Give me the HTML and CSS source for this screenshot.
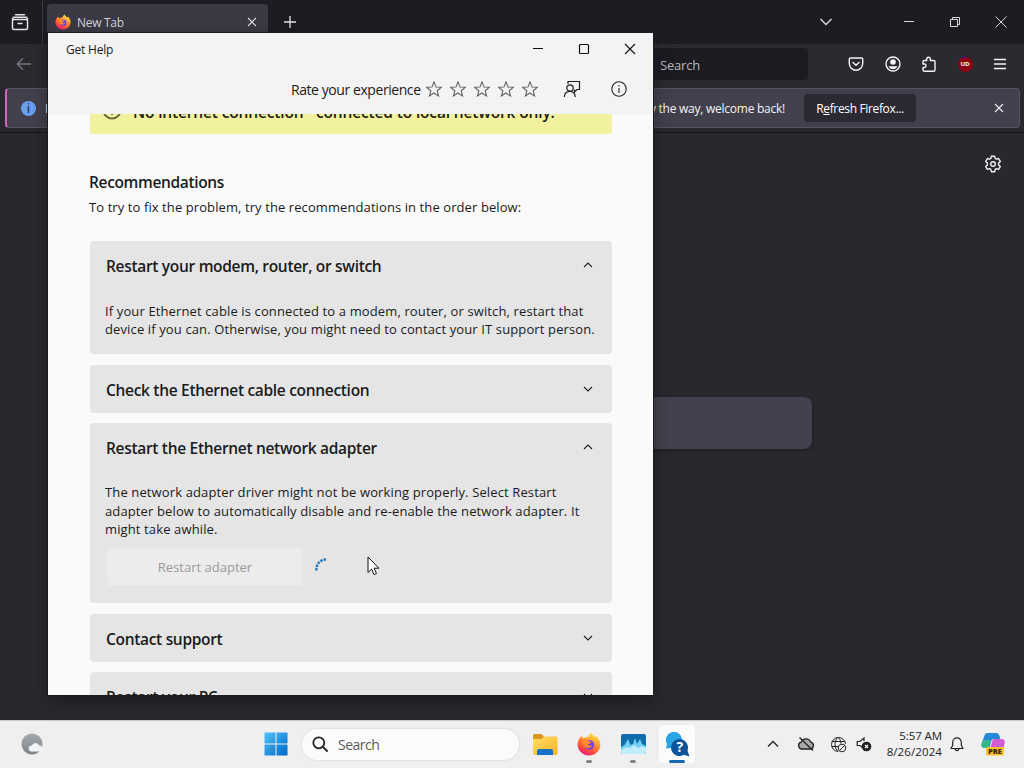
FILE: index.html
```
<!DOCTYPE html>
<html lang="en">
<head>
    <meta charset="UTF-8">
    <meta name="viewport" content="width=device-width, initial-scale=1.0">
    <title>Get Help</title>
    <link rel="stylesheet" href="styles.css">
</head>
<body>
    <!-- Shared logos -->
    <svg class="defs" width="0" height="0">
        <defs>
            <linearGradient id="foxBody" x1="0.8" y1="0" x2="0.3" y2="1">
                <stop offset="0" stop-color="#fff44f"/>
                <stop offset="0.4" stop-color="#ff9a2e"/>
                <stop offset="0.75" stop-color="#ff4b3e"/>
                <stop offset="1" stop-color="#e31587"/>
            </linearGradient>
            <linearGradient id="winBlue" x1="0" y1="0" x2="1" y2="1">
                <stop offset="0" stop-color="#4fc3f7"/>
                <stop offset="1" stop-color="#0067c8"/>
            </linearGradient>
            <linearGradient id="folder" x1="0" y1="0" x2="1" y2="1">
                <stop offset="0" stop-color="#ffdc6b"/>
                <stop offset="1" stop-color="#f9b81f"/>
            </linearGradient>
            <linearGradient id="moon" x1="0" y1="0" x2="0" y2="1">
                <stop offset="0" stop-color="#a3abb0"/>
                <stop offset="1" stop-color="#7d858b"/>
            </linearGradient>
            <symbol id="firefox" viewBox="0 0 24 24">
                <path fill="url(#foxBody)" d="M3 5.5 4.6 4l1.6 2.4C8 5.2 9.8 5 11.2 5.3 11.6 3.4 13 1.5 14.6.6c.2 2 2 3 3.4 4.2l1.5-.6c2.5 2.3 3.9 5.3 3.9 8.3A11.4 11.4 0 0 1 12 23.6 11.4 11.4 0 0 1 .6 12.5C.6 9.7 1.6 7.2 3 5.5z"/>
                <circle cx="12.4" cy="13" r="4.8" fill="#7542e5"/>
                <path fill="#ff8a26" d="M5.5 8.5c2-1 4.5-.5 6 .8 1.2.2 2.3.5 3 1-1 1.2-3 1-3.5 2.5 1 1.3 3 1 4.5.5-1 2.5-4.5 3.5-7.2 2C6 14 5 11 5.5 8.5z"/>
            </symbol>
        </defs>
    </svg>

    <div class="desktop">
        <div class="browser">
            <div class="tabbar">
                <div class="tab-overview">
                    <svg width="18" height="18" viewBox="0 0 18 18" fill="none" stroke="#e4e4e8" stroke-width="1.5" stroke-linecap="round"><path d="M4.5 1.7h9M1.5 6.2v-.7l1.2-1.2h12.6l1.2 1.2v.7"/><rect x="1.5" y="6.5" width="15" height="10" rx="1.5"/><path d="M7 10.5h4"/></svg>
                </div>
                <div class="tab">
                    <svg width="16" height="16"><use href="#firefox"/></svg>
                    <span class="tab-title">New Tab</span>
                    <svg width="10" height="10" viewBox="0 0 10 10" stroke="#d8d8dc" stroke-width="1.2"><path d="M1 1l8 8M9 1l-8 8"/></svg>
                </div>
                <svg class="new-tab" width="12" height="12" viewBox="0 0 12 12" stroke="#e4e4e8" stroke-width="1.3"><path d="M6 0v12M0 6h12"/></svg>
                <div class="browser-controls">
                    <svg width="14" height="14" viewBox="0 0 14 14" fill="none" stroke="#d8d8dc" stroke-width="1.5"><path d="M1.5 4 7 9.5 12.5 4"/></svg>
                    <svg width="12" height="12" viewBox="0 0 12 12" stroke="#d8d8dc"><path d="M1 5.5h10"/></svg>
                    <svg width="12" height="12" viewBox="0 0 12 12" fill="none" stroke="#d8d8dc"><path d="M1.5 3.5h7v7h-7zM3.5 3.5v-2h7v7h-2"/></svg>
                    <svg width="12" height="12" viewBox="0 0 12 12" stroke="#d8d8dc"><path d="M.5.5l11 11M11.5.5l-11 11"/></svg>
                </div>
            </div>

            <div class="navbar">
                <svg class="back" width="16" height="14" viewBox="0 0 16 14" fill="none" stroke="#77767f" stroke-width="1.3"><path d="M15 7H1.5M7 1.2 1.2 7 7 12.8"/></svg>
                <div class="url-bar">Search</div>
                <div class="nav-icons">
                    <svg width="16" height="16" viewBox="0 0 16 16" fill="none" stroke="#f4f4f6" stroke-width="1.4" stroke-linecap="round"><path d="M2.5 2h11a1.2 1.2 0 0 1 1.2 1.2V7.5A6.7 6.7 0 0 1 1.3 7.5V3.2A1.2 1.2 0 0 1 2.5 2z"/><path d="m5 6.5 3 2.8 3-2.8"/></svg>
                    <svg width="16" height="16" viewBox="0 0 16 16"><circle cx="8" cy="8" r="7" fill="none" stroke="#f4f4f6" stroke-width="1.4"/><circle cx="8" cy="6" r="2.8" fill="#f4f4f6"/><path fill="#f4f4f6" d="M3.5 10.2h9C11.5 12.3 10 13 8 13s-3.5-.7-4.5-2.8z"/></svg>
                    <svg width="16" height="16" viewBox="0 0 16 16" fill="none" stroke="#f4f4f6" stroke-width="1.4" stroke-linejoin="round"><path d="M2 8V5.8a1.3 1.3 0 0 1 1.3-1.3h2.4V3a1.8 1.8 0 0 1 3.6 0v1.5h3.4A1.3 1.3 0 0 1 14 5.8v8.1a1.3 1.3 0 0 1-1.3 1.3H3.3A1.3 1.3 0 0 1 2 13.9v-2.4h1.3a1.7 1.7 0 0 0 0-3.5z"/></svg>
                    <span class="ublock">UD</span>
                    <svg width="14" height="14" viewBox="0 0 14 14" stroke="#f4f4f6" stroke-width="1.4" stroke-linecap="round"><path d="M1.5 2.5h11M1.5 7h11M1.5 11.5h11"/></svg>
                </div>
            </div>

            <div class="infobar">
                <span class="info-dot">i</span>
                <span class="info-cut">It</span>
                <span class="info-text">By the way, welcome back!</span>
                <button class="refresh">R<u>e</u>fresh Firefox...</button>
                <svg class="info-close" width="10" height="10" viewBox="0 0 10 10" stroke="#e8e8ec" stroke-width="1.2"><path d="M1 1l8 8M9 1l-8 8"/></svg>
            </div>

            <div class="newtab-page">
                <svg class="gear" width="18" height="18" viewBox="0 0 18 18" fill="none" stroke="#f0f0f4" stroke-width="1.4" stroke-linejoin="round"><path d="M7.3 1.3h3.4l.5 2.2 1.2.7 2.2-.7 1.7 2.9L14.6 8v1.9l1.7 1.6-1.7 2.9-2.2-.7-1.2.7-.5 2.3H7.3l-.5-2.3-1.2-.7-2.2.7-1.7-2.9L3.4 9.9V8L1.7 6.4l1.7-2.9 2.2.7 1.2-.7z"/><circle cx="9" cy="9" r="2.3"/></svg>
                <div class="newtab-search"></div>
            </div>
        </div>

        <!-- Get Help window -->
        <div class="help-window">
            <div class="help-header">
                <div class="titlebar">
                    <span class="app-title">Get Help</span>
                    <div class="window-controls">
                        <svg width="12" height="12" viewBox="0 0 12 12" stroke="#111"><path d="M1 5.5h10"/></svg>
                        <svg width="12" height="12" viewBox="0 0 12 12" fill="none" stroke="#111" stroke-width="1.2"><rect x="1.5" y="1.5" width="9" height="9" rx="1"/></svg>
                        <svg width="12" height="12" viewBox="0 0 12 12" stroke="#111" stroke-width="1.1"><path d="M1 1l10 10M11 1 1 11"/></svg>
                    </div>
                </div>
                <div class="rating">
                    <span class="rate-label">Rate your experience</span>
                    <div class="stars">
                        <svg viewBox="0 0 16 16"><path d="m8 .9 2 5.1 5.4.3-4.2 3.4 1.4 5.3L8 12l-4.6 3 1.4-5.3L.6 6.3 6 6z"/></svg>
                        <svg viewBox="0 0 16 16"><path d="m8 .9 2 5.1 5.4.3-4.2 3.4 1.4 5.3L8 12l-4.6 3 1.4-5.3L.6 6.3 6 6z"/></svg>
                        <svg viewBox="0 0 16 16"><path d="m8 .9 2 5.1 5.4.3-4.2 3.4 1.4 5.3L8 12l-4.6 3 1.4-5.3L.6 6.3 6 6z"/></svg>
                        <svg viewBox="0 0 16 16"><path d="m8 .9 2 5.1 5.4.3-4.2 3.4 1.4 5.3L8 12l-4.6 3 1.4-5.3L.6 6.3 6 6z"/></svg>
                        <svg viewBox="0 0 16 16"><path d="m8 .9 2 5.1 5.4.3-4.2 3.4 1.4 5.3L8 12l-4.6 3 1.4-5.3L.6 6.3 6 6z"/></svg>
                    </div>
                    <svg class="feedback" width="18" height="18" viewBox="0 0 18 18" fill="none" stroke="#222" stroke-width="1.2"><path d="M5 4V1.5h11.500v8H14L11.500 12V9.500"/><circle cx="7" cy="8" r="3.2"/><path d="M1.3 17c.2-3.500 2.500-5.600 5.700-5.600s5 2.100 5.300 5.600"/></svg>
                    <svg class="about" width="16" height="16" viewBox="0 0 16 16" fill="none" stroke="#222" stroke-width="1.1"><circle cx="8" cy="8" r="7.2"/><path d="M8 7v5M8 4v1.4"/></svg>
                </div>
            </div>

            <div class="help-body">
                <div class="banner">
                    <svg width="20" height="20" viewBox="0 0 20 20" fill="none" stroke="#6b6a3c" stroke-width="2"><circle cx="10" cy="10" r="8.5"/><path d="M10 5v6M10 13v2"/></svg>
                    <span>No internet connection - connected to local network only.</span>
                </div>

                <h2>Recommendations</h2>
                <p class="intro">To try to fix the problem, try the recommendations in the order below:</p>

                <div class="card">
                    <div class="card-head">
                        <span>Restart your modem, router, or switch</span>
                        <svg class="chevron" viewBox="0 0 10 10"><path d="M1 7l4-4 4 4"/></svg>
                    </div>
                    <div class="card-text modem-text">If your Ethernet cable is connected to a modem, router, or switch, restart that<br>device if you can. Otherwise, you might need to contact your IT support person.</div>
                </div>

                <div class="card">
                    <div class="card-head">
                        <span>Check the Ethernet cable connection</span>
                        <svg class="chevron" viewBox="0 0 10 10"><path d="M1 3l4 4 4-4"/></svg>
                    </div>
                </div>

                <div class="card">
                    <div class="card-head">
                        <span>Restart the Ethernet network adapter</span>
                        <svg class="chevron" viewBox="0 0 10 10"><path d="M1 7l4-4 4 4"/></svg>
                    </div>
                    <div class="card-text adapter-text">The network adapter driver might not be working properly. Select Restart<br>adapter below to automatically disable and re-enable the network adapter. It<br>might take awhile.</div>
                    <div class="action">
                        <button class="restart" disabled>Restart adapter</button>
                        <svg class="spinner" width="14" height="16" viewBox="0 0 14 16"><path d="M1.5 13.5C.8 7 5.5 2 12 2.5" fill="none" stroke="#2a7cbf" stroke-width="2.5" stroke-dasharray="2.5 1"/></svg>
                    </div>
                </div>

                <div class="card">
                    <div class="card-head">
                        <span>Contact support</span>
                        <svg class="chevron" viewBox="0 0 10 10"><path d="M1 3l4 4 4-4"/></svg>
                    </div>
                </div>

                <div class="card">
                    <div class="card-head">
                        <span>Restart your PC</span>
                        <svg class="chevron" viewBox="0 0 10 10"><path d="M1 3l4 4 4-4"/></svg>
                    </div>
                </div>
            </div>
        </div>

        <svg class="cursor" width="13" height="20" viewBox="0 0 13 20"><path d="M1 1v15.5l3.6-3.4 2.4 5.5 2.5-1.1-2.4-5.3h4.8z" fill="#fff" stroke="#111"/></svg>

        <div class="taskbar">
            <svg class="widgets" width="22" height="22" viewBox="0 0 22 22"><circle cx="11" cy="11" r="10.5" fill="url(#moon)"/><path d="M10.500 18.500a3 3 0 0 1 .3-6 4 4 0 0 1 7.200-.3c2 0 3.500 1.300 3.500 3.300s-1.500 3-3 3z" fill="#f1f4f8"/></svg>
            <svg class="start" width="24" height="24" viewBox="0 0 24 24" fill="url(#winBlue)"><path d="M.5.5h11v11H.5zM12.5.5h11v11h-11zM.5 12.5h11v11H.5zM12.5 12.5h11v11h-11z"/></svg>
            <div class="task-search">
                <svg width="16" height="16" viewBox="0 0 16 16" fill="none" stroke="#222" stroke-width="1.8" stroke-linecap="round"><circle cx="6.8" cy="6.8" r="5.5"/><path d="m11 11 4 4"/></svg>
                <span>Search</span>
            </div>
            <div class="apps">
                <div class="app">
                    <svg width="26" height="24" viewBox="0 0 26 24"><path d="M1 3.5A1.5 1.5 0 0 1 2.5 2h7L12 4.5V9H1z" fill="#d9971b"/><path d="M1 7h8.5L12 4.5h12A1.5 1.5 0 0 1 25.5 6v15.5A1.5 1.5 0 0 1 24 23H2.5A1.5 1.5 0 0 1 1 21.5z" fill="url(#folder)"/><path d="M5 23v-4a2 2 0 0 1 2-2h12a2 2 0 0 1 2 2v4z" fill="#1672c4"/></svg>
                </div>
                <div class="app">
                    <svg width="24" height="24"><use href="#firefox"/></svg>
                    <span class="running"></span>
                </div>
                <div class="app">
                    <svg width="25" height="20" viewBox="0 0 25 20"><rect width="25" height="20" rx="2" fill="#126bab"/><path d="M0 13l3.5-2L7 5l2.500 6 2.500-1 2-6 2 6 3-5 2 5 4 2v6a2 2 0 0 1-2 2H2a2 2 0 0 1-2-2z" fill="#6fd0f5"/><path d="M0 16l5-3 4 1 4-3 4 3 4-2 4 2v4a2 2 0 0 1-2 2H2a2 2 0 0 1-2-2z" fill="#c1eefc"/></svg>
                    <span class="running"></span>
                </div>
                <div class="app active">
                    <svg width="25" height="25" viewBox="0 0 25 25"><path d="M1 16.5 2 12a8 8 0 1 1 5.5 3.8z" fill="#27a5e5"/><path d="M24.5 24.5 19 22.8A8.5 8.5 0 1 1 22.5 18.5z" fill="#0b549c"/><text x="14.8" y="20.2" text-anchor="middle" class="question">?</text></svg>
                    <span class="running"></span>
                </div>
            </div>
            <div class="tray">
                <svg width="12" height="8" viewBox="0 0 12 8" fill="none" stroke="#222" stroke-width="1.3"><path d="M1 6.5l5-5 5 5"/></svg>
                <svg class="cloud" width="18" height="14" viewBox="0 0 18 14" fill="#aaa" stroke="#222" stroke-width="1.3"><path d="M5 12a3.500 3.500 0 0 1-.7-6.900 5 5 0 0 1 9.400 0A3.500 3.500 0 0 1 13 12z"/><path d="M2.500.5l13.500 13"/></svg>
                <svg class="globe" width="17" height="17" viewBox="0 0 17 17" fill="none" stroke="#222"><path d="M8 15.5A7 7 0 1 1 15.5 8M8 1.2C4 4.5 4 11.5 8 15.5M8 1.2c2 1.8 3 4 3 6.500M1.800 5.500h13M1.800 10.500H8"/><circle cx="12" cy="12" r="3.8"/><path d="M9.500 14.500l5-5"/></svg>
                <svg class="sound" width="16" height="16" viewBox="0 0 16 16" fill="none" stroke="#222" stroke-width="1.2"><path d="M7 12 4 9.500H1.200v-4H4L8 2v3"/><circle cx="10.5" cy="10.5" r="4.2" fill="#222"/><path d="M9 9l3 3M12 9l-3 3" stroke="#fff"/></svg>
                <div class="clock"><span>5:57 AM</span><span class="date">8/26/2024</span></div>
                <svg class="bell" width="14" height="16" viewBox="0 0 14 16" fill="none" stroke="#222" stroke-width="1.2" stroke-linejoin="round"><path d="M2.7 6.2a4.3 4.3 0 0 1 8.6 0v3L13 12.500H1l1.700-3.300zM5 12.500c.2 2.700 3.800 2.700 4 0"/></svg>
                <svg class="copilot" width="26" height="26" viewBox="0 0 26 26"><path d="M7 2h9c2 0 3 1 3.500 3l.8 3H14c-2 0-2.500 1-3 3l-1.500 6H5c-3 0-4-2-3.300-4.500L4.500 4.500C5 3 6 2 7 2z" fill="#2388d5"/><path d="M3 9h7.500L9 17H5c-3 0-4-2-3.300-4.500z" fill="#37b58b"/><path d="M14 8h7c3 0 4.500 2 3.700 4.500L22.500 20c-.5 2-1.500 3-3.500 3H9l3-12c.4-2 1-3 2-3z" fill="#d35bd4"/><rect x="6" y="16" width="18" height="8.5" rx="1.5" fill="#fcc32c"/><text x="15" y="23.100" text-anchor="middle" class="pre">PRE</text></svg>
            </div>
        </div>
    </div>
</body>
</html>
```
FILE: styles.css
```
* {
    margin: 0;
    padding: 0;
    box-sizing: border-box;
    font-family: 'Open Sans', 'Noto Sans', sans-serif;
}

body {
    background: #2b2a33;
    overflow: hidden;
}

svg {
    display: block;
    flex-shrink: 0;
}

.defs {
    position: absolute;
}

.desktop {
    position: relative;
    width: 1024px;
    height: 768px;
    display: flex;
    flex-direction: column;
    overflow: hidden;
    white-space: nowrap;
}

/* Browser behind */
.browser {
    height: 720px;
    background: #29282e;
    display: flex;
    flex-direction: column;
    color: #f4f4f6;
}

.tabbar {
    height: 44px;
    background: #1d1c22;
    display: flex;
    align-items: center;
}

.tab-overview {
    width: 43px;
    height: 44px;
    padding-left: 11px;
    border-right: 1px solid #39383f;
    display: flex;
    align-items: center;
}

.tab {
    width: 221px;
    height: 40px;
    margin: 4px 0 0 4px;
    padding: 0 11px 4px 8px;
    background: #3b3943;
    border-radius: 4px 4px 0 0;
    display: flex;
    align-items: center;
}

.tab-title {
    flex: 1;
    margin-left: 6px;
    font-size: 12px;
    letter-spacing: -0.3px;
    color: #d4d4d8;
}

.new-tab {
    margin-left: 16px;
}

.browser-controls {
    margin-left: auto;
    padding-right: 17px;
    display: flex;
    align-items: center;
    gap: 34px;
}

.browser-controls svg:first-child {
    margin-right: 36px;
}

.navbar {
    height: 44px;
    display: flex;
    align-items: center;
    background: #2b2a31;
    padding-bottom: 4px;
}

.back {
    margin-left: 16px;
}

.url-bar {
    width: 400px;
    height: 32px;
    margin-left: 376px;
    padding-left: 252px;
    line-height: 34px;
    font-size: 13px;
    letter-spacing: -0.2px;
    color: #b8b8be;
    background: #1c1b22;
    border-radius: 4px;
}

.nav-icons {
    flex: 1;
    padding: 0 17px 0 40px;
    display: flex;
    align-items: center;
    justify-content: space-between;
}

.ublock {
    width: 15px;
    height: 15px;
    border-radius: 50%;
    background: #8b0612;
    color: #fff;
    font-size: 6px;
    font-weight: 700;
    line-height: 15px;
    text-align: center;
}

.infobar {
    height: 40px;
    margin: 0 4px 0 5px;
    padding: 0 15px 0 14px;
    background: #42404d;
    border: 1px solid #55535f;
    border-left: 2px solid #d06ac0;
    border-radius: 4px;
    display: flex;
    align-items: center;
    font-size: 12px;
}

.info-dot {
    width: 15px;
    height: 15px;
    border-radius: 50%;
    background: #69a0f2;
    color: #26375c;
    font-weight: 600;
    line-height: 15px;
    text-align: center;
}

.info-cut {
    margin-left: 9px;
}

.info-text {
    margin-left: auto;
    letter-spacing: -0.25px;
}

.refresh {
    width: 112px;
    height: 28px;
    margin: 0 78px 0 19px;
    border: none;
    border-radius: 4px;
    background: #2b2a33;
    color: #fff;
    font-size: 12px;
    font-weight: 500;
    letter-spacing: -0.35px;
}

.newtab-page {
    flex: 1;
    margin-top: 4px;
    border-top: 1px solid #17161b;
    display: flex;
    flex-direction: column;
}

.gear {
    margin: 22px 22px 0 auto;
}

.newtab-search {
    width: 600px;
    height: 52px;
    margin: 224px 0 0 212px;
    border-radius: 8px;
    background: #42414d;
    box-shadow: 0 1px 4px rgba(0, 0, 0, 0.3);
}

/* Get Help window */
.help-window {
    position: absolute;
    left: 48px;
    top: 33px;
    width: 605px;
    height: 662px;
    background: #fafafa;
    color: #1b1b1b;
    display: flex;
    flex-direction: column;
    overflow: hidden;
    box-shadow: 0 0 0 1px #1c1b20, 0 6px 18px rgba(0, 0, 0, 0.35);
}

.help-header {
    height: 81px;
    background: #f3f3f3;
}

.titlebar {
    height: 32px;
    padding: 0 17px 0 18px;
    display: flex;
    align-items: center;
    justify-content: space-between;
}

.app-title {
    font-size: 12px;
    letter-spacing: -0.2px;
    margin-top: 1px;
}

.window-controls {
    display: flex;
    gap: 34px;
}

.rating {
    height: 48px;
    padding-left: 243px;
    display: flex;
    align-items: center;
}

.rate-label {
    width: 135px;
    font-size: 14px;
    letter-spacing: -0.43px;
    margin-top: 1px;
}

.stars {
    display: flex;
    gap: 8px;
}

.stars svg {
    width: 16px;
    height: 16px;
    fill: none;
    stroke: #666;
    stroke-width: 1.1;
}

.feedback {
    margin-left: 25px;
}

.about {
    margin-left: 30px;
}

.help-body {
    flex: 1;
    overflow: hidden;
    padding: 0 41px 0 42px;
}

.banner {
    height: 44px;
    margin-top: -24px;
    padding-left: 12px;
    background: #f2f19d;
    border-radius: 3px;
    display: flex;
    align-items: center;
    font-size: 15.5px;
    font-weight: 600;
    letter-spacing: -0.15px;
}

.banner svg {
    margin: -4px 11px 0 0;
}

.banner span {
    margin-top: -1px;
}

h2 {
    margin: 37px 0 0 -1px;
    font-size: 15.5px;
    font-weight: 600;
    line-height: 22px;
    letter-spacing: -0.35px;
}

.intro {
    margin: 4px 0 24px -1px;
    font-size: 13px;
    line-height: 20px;
    letter-spacing: 0.09px;
}

.card {
    background: #e5e5e5;
    border-radius: 4px;
    margin-bottom: 10.5px;
    padding-bottom: 1px;
}

.card-head {
    height: 47px;
    padding: 3.4px 19px 0 16px;
    display: flex;
    align-items: center;
    justify-content: space-between;
    font-size: 15.5px;
    font-weight: 600;
    letter-spacing: -0.31px;
}

.chevron {
    width: 10px;
    height: 10px;
    margin-top: -2.4px;
    fill: none;
    stroke: #222;
    stroke-width: 1.1;
}

.card-text {
    padding-left: 15px;
    font-size: 13px;
    line-height: 18.5px;
    letter-spacing: 0.125px;
}

.modem-text {
    padding-top: 13.5px;
    padding-bottom: 14.5px;
}

.adapter-text {
    padding-top: 13px;
}

.action {
    padding: 9.5px 0 16px 17px;
    display: flex;
    align-items: center;
}

.restart {
    width: 196px;
    height: 38px;
    border: 1px solid #e9e9e9;
    border-radius: 3px;
    background: #ececec;
    color: #9a9a9a;
    font-size: 13px;
}

.spinner {
    margin: -5px 0 0 12px;
}

.cursor {
    position: absolute;
    left: 367px;
    top: 556px;
}

/* Taskbar */
.taskbar {
    height: 48px;
    padding-bottom: 1px;
    background: #efefef;
    border-top: 1px solid #c9c9c9;
    display: flex;
    align-items: center;
    color: #222;
}

.widgets {
    margin-left: 21px;
}

.start {
    margin-left: 221px;
}

.task-search {
    width: 217px;
    height: 31px;
    margin-left: 14px;
    padding-left: 10px;
    border-radius: 16px;
    background: #fbfbfb;
    box-shadow: 0 0 1px 1px #e2e2e2;
    display: flex;
    align-items: center;
    gap: 10px;
    font-size: 14px;
    color: #5a5a5a;
}

.task-search span {
    letter-spacing: -0.5px;
}

.apps {
    display: flex;
    gap: 8px;
    margin-left: 8px;
}

.app {
    position: relative;
    width: 36px;
    height: 38px;
    border-radius: 4px;
    display: flex;
    align-items: center;
    justify-content: center;
}

.app.active {
    background: #fbfbfb;
}

.running {
    position: absolute;
    left: 15px;
    bottom: 0;
    width: 6px;
    height: 3px;
    border-radius: 2px;
    background: #858585;
}

.active .running {
    left: 10px;
    width: 16px;
    background: #1469b0;
}

.question {
    font-size: 14px;
    font-weight: 700;
    fill: #fff;
}

.tray {
    flex: 1;
    padding-right: 18px;
    display: flex;
    align-items: center;
    justify-content: flex-end;
}

.cloud {
    margin-left: 18px;
}

.globe {
    margin-left: 15px;
}

.sound {
    margin-left: 9px;
}

.clock {
    width: 60px;
    margin-left: 10px;
    display: flex;
    flex-direction: column;
    align-items: flex-end;
    font-size: 11.5px;
    line-height: 16px;
    letter-spacing: -0.1px;
}

.date {
    letter-spacing: 0.1px;
}

.bell {
    margin-left: 8px;
}

.copilot {
    margin-left: 16px;
}

.pre {
    font-size: 7.5px;
    font-weight: 800;
    fill: #332200;
}
```
